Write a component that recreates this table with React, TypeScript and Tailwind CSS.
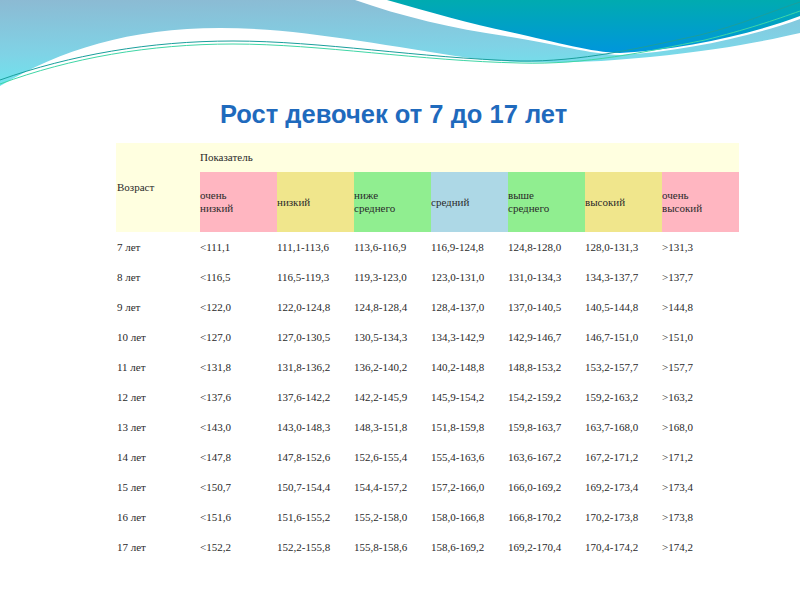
import React from "react"

type Level = { label: string[]; bg: string }

const levels: Level[] = [
  { label: ["очень", "низкий"], bg: "bg-[#ffb6c1]" },
  { label: ["низкий"], bg: "bg-[#f0e68c]" },
  { label: ["ниже", "среднего"], bg: "bg-[#90ee90]" },
  { label: ["средний"], bg: "bg-[#add8e6]" },
  { label: ["выше", "среднего"], bg: "bg-[#90ee90]" },
  { label: ["высокий"], bg: "bg-[#f0e68c]" },
  { label: ["очень", "высокий"], bg: "bg-[#ffb6c1]" },
]

const rows: [string, string[]][] = [
  ["7 лет", ["<111,1", "111,1-113,6", "113,6-116,9", "116,9-124,8", "124,8-128,0", "128,0-131,3", ">131,3"]],
  ["8 лет", ["<116,5", "116,5-119,3", "119,3-123,0", "123,0-131,0", "131,0-134,3", "134,3-137,7", ">137,7"]],
  ["9 лет", ["<122,0", "122,0-124,8", "124,8-128,4", "128,4-137,0", "137,0-140,5", "140,5-144,8", ">144,8"]],
  ["10 лет", ["<127,0", "127,0-130,5", "130,5-134,3", "134,3-142,9", "142,9-146,7", "146,7-151,0", ">151,0"]],
  ["11 лет", ["<131,8", "131,8-136,2", "136,2-140,2", "140,2-148,8", "148,8-153,2", "153,2-157,7", ">157,7"]],
  ["12 лет", ["<137,6", "137,6-142,2", "142,2-145,9", "145,9-154,2", "154,2-159,2", "159,2-163,2", ">163,2"]],
  ["13 лет", ["<143,0", "143,0-148,3", "148,3-151,8", "151,8-159,8", "159,8-163,7", "163,7-168,0", ">168,0"]],
  ["14 лет", ["<147,8", "147,8-152,6", "152,6-155,4", "155,4-163,6", "163,6-167,2", "167,2-171,2", ">171,2"]],
  ["15 лет", ["<150,7", "150,7-154,4", "154,4-157,2", "157,2-166,0", "166,0-169,2", "169,2-173,4", ">173,4"]],
  ["16 лет", ["<151,6", "151,6-155,2", "155,2-158,0", "158,0-166,8", "166,8-170,2", "170,2-173,8", ">173,8"]],
  ["17 лет", ["<152,2", "152,2-155,8", "155,8-158,6", "158,6-169,2", "169,2-170,4", "170,4-174,2", ">174,2"]],
]

function Waves() {
  return (
    <svg width="800" height="90" viewBox="0 0 800 90" className="block">
      <defs>
        <linearGradient id="sky" x1="0" y1="0" x2="0.15" y2="1">
          <stop offset="0" stopColor="#8cbad3" />
          <stop offset="0.6" stopColor="#7fd3e6" />
          <stop offset="1" stopColor="#6ae8ef" />
        </linearGradient>
        <linearGradient id="blob" x1="0" y1="0" x2="0" y2="1">
          <stop offset="0" stopColor="#00abb0" />
          <stop offset="1" stopColor="#0096dc" />
        </linearGradient>
      </defs>
      <rect x="0" y="0" width="800" height="90" fill="url(#sky)" />
      <path d="M355,0 C400,16 455,29 505,36 C555,44 590,54 620,55 C680,52 750,37 800,19 L800,0 Z" fill="#ffffff" />
      <path d="M387,0 C430,12 470,24 510,32 C560,43 590,52 620,53 C680,50 750,35 800,16 L800,0 Z" fill="url(#blob)" />
      <path d="M0,86 C60,50 130,28 220,28 C300,28 380,45 470,58 C530,66 600,62 650,57 C720,50 770,40 800,33 L800,90 L0,90 Z" fill="#ffffff" />
      <path d="M0,80 C70,55 150,41 233,41 C320,41 420,58 520,61 C580,62 640,48 700,35 C740,25 770,12 800,2" fill="none" stroke="#1a9f9c" strokeWidth="1" />
      <path d="M0,84 C70,58 150,44 233,44 C320,44 420,61 520,63 C585,65 645,52 705,40 C745,30 775,20 800,11" fill="none" stroke="#3fd6a6" strokeWidth="1" />
    </svg>
  )
}

export default function App() {
  return (
    <div className="w-[800px] h-[600px] bg-white overflow-hidden">
      <Waves />

      <h1 className="mt-[10px] pl-[220px] text-[25.5px] leading-[28px] font-bold text-[#1f6abd] font-['Liberation_Sans',Arial,sans-serif]">
        Рост девочек от 7 до 17 лет
      </h1>

      <div className="mt-[15px] ml-[116px] w-[623px] grid grid-cols-[84px_repeat(7,77px)] grid-rows-[29px_60px] auto-rows-[30px] text-[11px] leading-[13px] text-[#2a2a2a] font-['Liberation_Serif','Times_New_Roman',serif]">
        <div className="row-span-2 bg-[#ffffe0] flex items-center pl-[1px]">Возраст</div>
        <div className="col-span-7 bg-[#ffffe0] flex items-center">Показатель</div>

        {levels.map((level, i) => (
          <div key={i} className={`${level.bg} flex flex-col justify-center`}>
            {level.label.map(line => (
              <span key={line}>{line}</span>
            ))}
          </div>
        ))}

        {rows.map(([age, values]) => (
          <React.Fragment key={age}>
            <div className="flex items-center pl-[1px]">{age}</div>
            {values.map((v, j) => (
              <div key={j} className="flex items-center">{v}</div>
            ))}
          </React.Fragment>
        ))}
      </div>
    </div>
  )
}
